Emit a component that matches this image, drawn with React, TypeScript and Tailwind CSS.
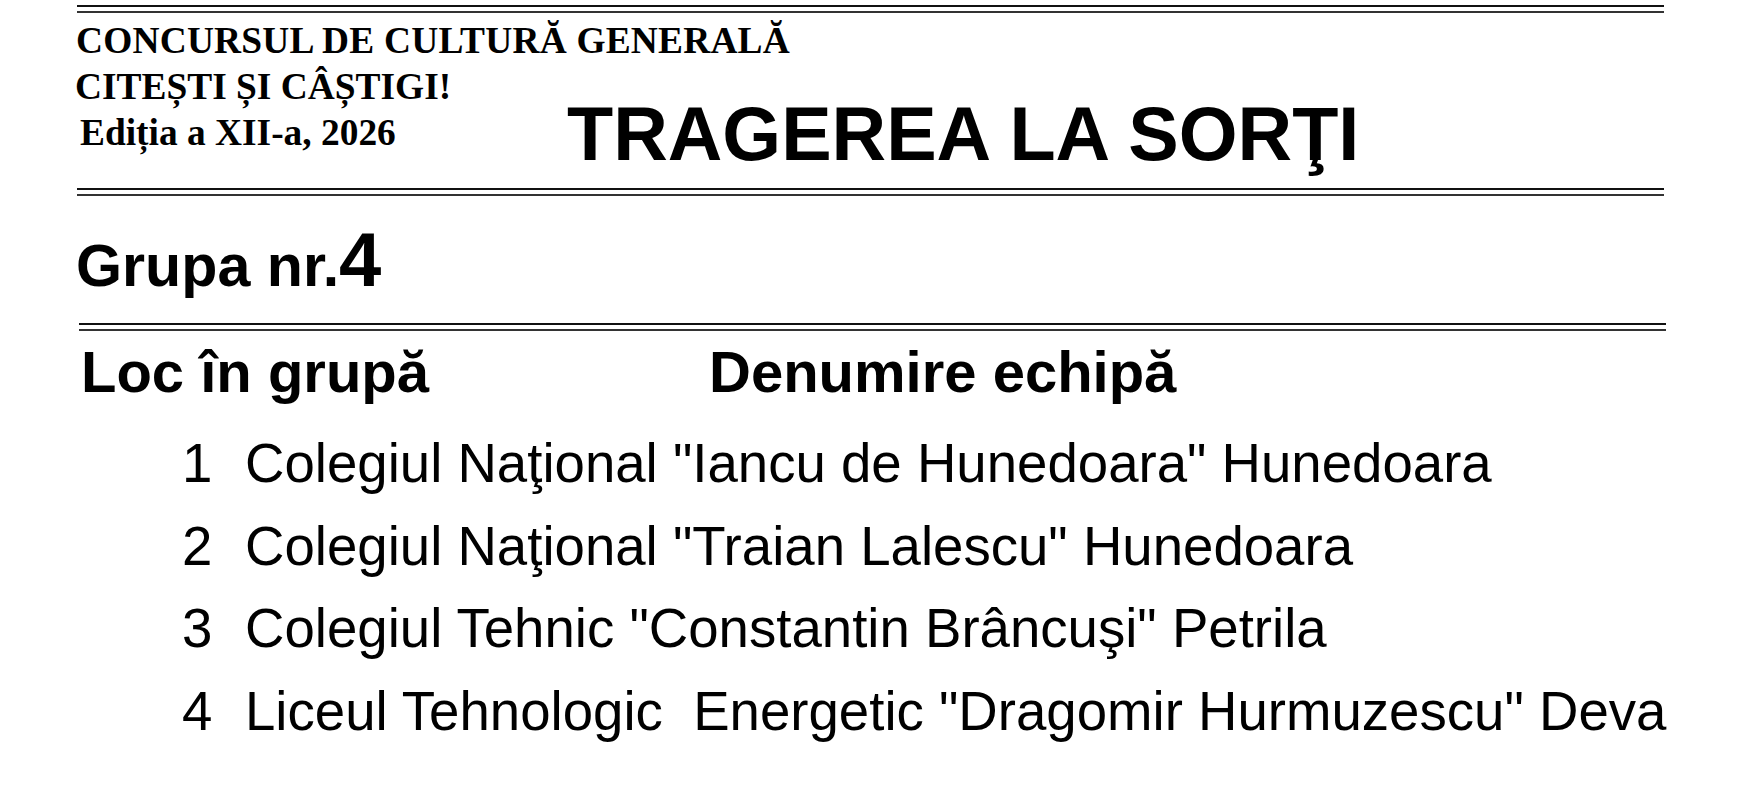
const sans = "font-['Liberation_Sans',Arial,sans-serif]";
const serif = "font-['Liberation_Serif','Times_New_Roman',serif]";

function DoubleRule({ className }: { className: string }) {
  return (
    <div className={className}>
      <div className="h-[2px] bg-[#111]" />
      <div className="mt-[4px] h-[2px] bg-[#333]" />
    </div>
  );
}

const teams = [
  { loc: 1, name: 'Colegiul Naţional "Iancu de Hunedoara" Hunedoara' },
  { loc: 2, name: 'Colegiul Naţional "Traian Lalescu" Hunedoara' },
  { loc: 3, name: 'Colegiul Tehnic "Constantin Brâncuşi" Petrila' },
  { loc: 4, name: 'Liceul Tehnologic  Energetic "Dragomir Hurmuzescu" Deva' },
];

export default function App() {
  return (
    <div className={`w-[1755px] h-[794px] bg-white text-black overflow-hidden ${sans}`}>
      <div className="h-[5px]" />
      <DoubleRule className="ml-[77px] w-[1587px]" />

      {/* antet */}
      <div className="flex h-[175px] items-start">
        <div className={`${serif} w-[567px] shrink-0 mt-[5px] whitespace-nowrap font-bold text-[37.4px] leading-[46px]`}>
          <div className="ml-[76px] tracking-[0.2px]">CONCURSUL DE CULTURĂ GENERALĂ</div>
          <div className="ml-[75px]">CITEȘTI ȘI CÂȘTIGI!</div>
          <div className="ml-[80px]">Ediția a XII-a, 2026</div>
        </div>
        <h1 className="mt-[81px] whitespace-nowrap font-bold text-[75.6px] leading-[80px]">
          TRAGEREA LA SORŢI
        </h1>
      </div>

      <DoubleRule className="ml-[77px] w-[1587px]" />

      <div className="h-[127px] pt-[26px] pl-[76px] font-bold text-[59.2px] leading-none">
        Grupa nr.<span className="text-[76px] leading-none">4</span>
      </div>

      <DoubleRule className="ml-[79px] w-[1587px]" />

      <div className="mt-[12px] flex font-bold text-[58px] leading-none">
        <div className="ml-[81px] w-[628px]">Loc în grupă</div>
        <div>Denumire echipă</div>
      </div>

      <div className="mt-[22px] text-[54.6px] leading-[82.5px]">
        {teams.map((t) => (
          <div key={t.loc} className="flex pl-[182px] gap-[33px]">
            <span className="w-[30px]">{t.loc}</span>
            <span className="whitespace-pre">{t.name}</span>
          </div>
        ))}
      </div>
    </div>
  );
}
